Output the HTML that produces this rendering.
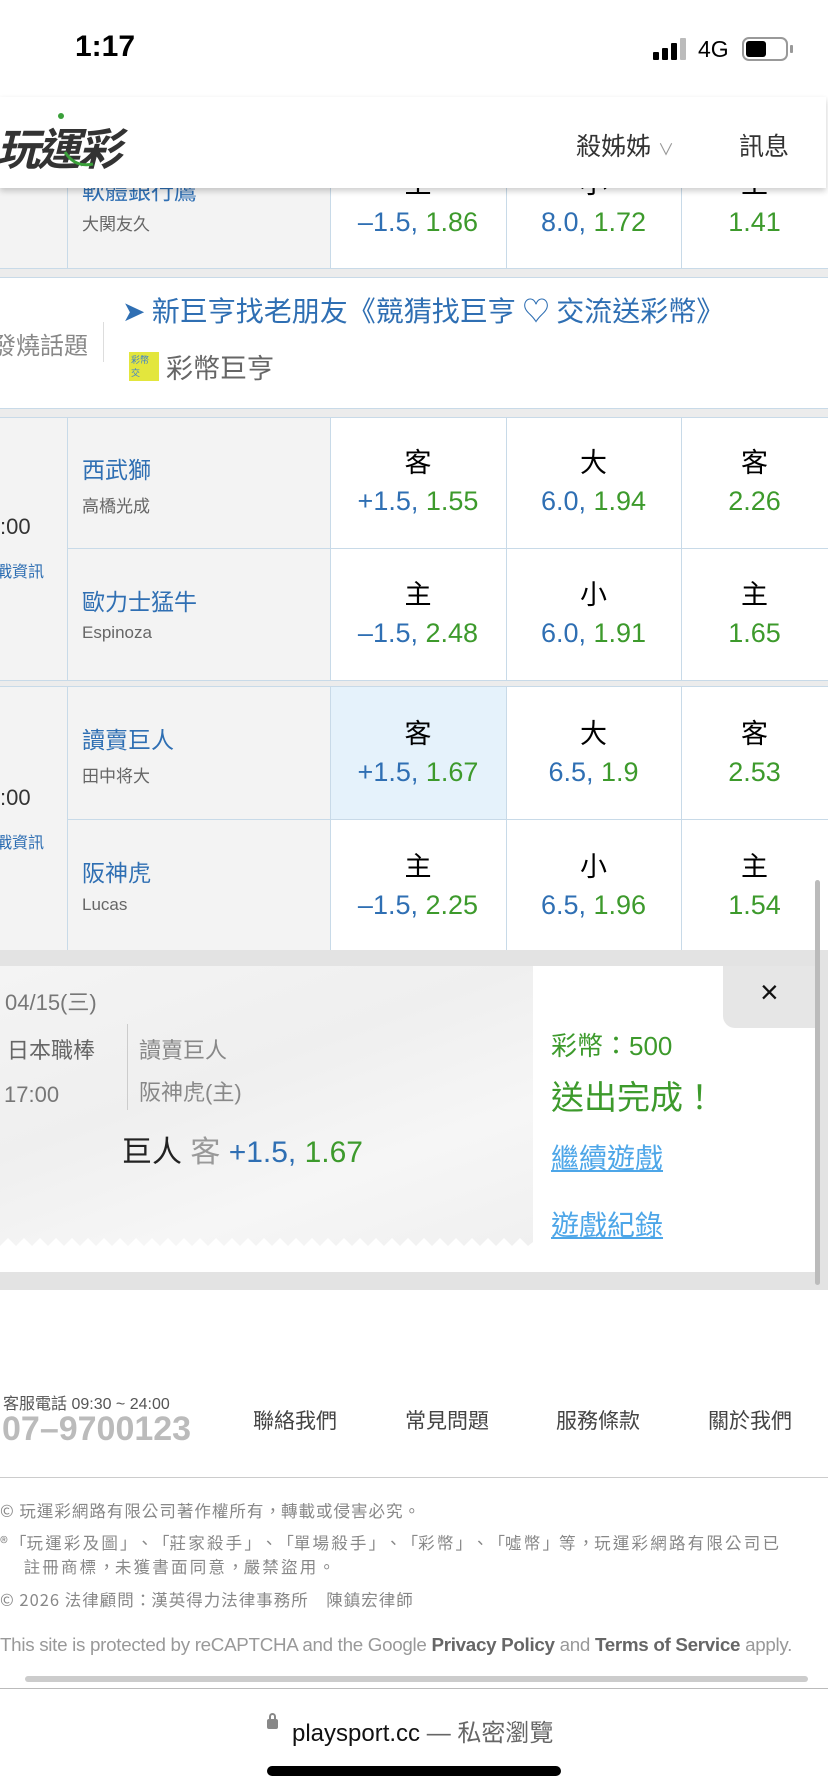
<!DOCTYPE html>
<html><head><meta charset="utf-8">
<style>
*{margin:0;padding:0;box-sizing:border-box}
body{width:828px;height:1792px;position:relative;overflow:hidden;background:#fff;font-family:"Liberation Sans","Noto Sans CJK TC",sans-serif;}
.a{position:absolute;white-space:nowrap}
.b{color:#2f6fb3}.g{color:#3d9a2c}
.cell{position:absolute;text-align:center;font-size:27px;line-height:38px}
.nm{position:absolute;left:82px;font-size:23px;color:#2f6fb3}
.sb{position:absolute;left:82px;font-size:17px;color:#666}
.vl{position:absolute;width:1px;background:#c8dae8}
.hl{position:absolute;height:1px;background:#c8dae8;left:0;width:828px}
.cjk{font-family:"Noto Sans CJK TC","Liberation Sans",sans-serif}
.p{display:inline-block;width:1em;text-align:center}
</style></head><body>
<div class="a" style="left:75px;top:30px;font-size:30px;font-weight:bold;color:#000">1:17</div>
<div class="a" style="left:653px;top:52px;width:6px;height:8px;background:#000;border-radius:1px"></div>
<div class="a" style="left:662px;top:48px;width:6px;height:12px;background:#000;border-radius:1px"></div>
<div class="a" style="left:671px;top:43px;width:6px;height:17px;background:#000;border-radius:1px"></div>
<div class="a" style="left:680px;top:38px;width:6px;height:22px;background:#bbb;border-radius:1px"></div>
<div class="a" style="left:698px;top:36px;font-size:23px;color:#000">4G</div>
<div class="a" style="left:742px;top:37px;width:46px;height:24px;border:2px solid #999;border-radius:7px"></div>
<div class="a" style="left:746px;top:41px;width:20px;height:16px;background:#000;border-radius:3px"></div>
<div class="a" style="left:790px;top:45px;width:3px;height:8px;background:#999;border-radius:1px"></div>

<div class="a" style="left:0;top:97px;width:828px;height:171px;background:#fff"></div>
<div class="a" style="left:0;top:97px;width:330px;height:171px;background:#f3f3f3"></div>
<div class="vl" style="left:67px;top:97px;height:171px"></div>
<div class="vl" style="left:330px;top:97px;height:171px"></div>
<div class="vl" style="left:506px;top:97px;height:171px"></div>
<div class="vl" style="left:681px;top:97px;height:171px"></div>
<div class="nm" style="top:172px">軟體銀行鷹</div>
<div class="cell" style="left:330px;top:165px;width:176px">主</div>
<div class="cell" style="left:506px;top:165px;width:175px">小</div>
<div class="cell" style="left:681px;top:165px;width:147px">主</div>
<div class="sb" style="top:210px">大関友久</div>
<div class="cell" style="left:330px;top:203px;width:176px"><span class="b">–1.5,</span> <span class="g">1.86</span></div>
<div class="cell" style="left:506px;top:203px;width:175px"><span class="b">8.0,</span> <span class="g">1.72</span></div>
<div class="cell g" style="left:681px;top:203px;width:147px">1.41</div>
<div class="hl" style="top:268px"></div>
<div class="a" style="left:0;top:269px;width:828px;height:8px;background:#ececec"></div>
<div class="hl" style="top:277px"></div>

<div class="a" style="left:-8px;top:326px;font-size:24px;color:#888">發燒話題</div>
<div class="a" style="left:103px;top:322px;width:1px;height:40px;background:#ddd"></div>
<div class="a cjk" style="left:122px;top:290px;font-size:28px;color:#2f6fb3">➤ 新巨亨找老朋友《競猜找巨亨 ♡ 交流送彩幣》</div>
<div class="a" style="left:129px;top:352px;width:30px;height:29px;background:#e3e63d;font-size:9px;color:#3b7fd0;line-height:13px;padding:2px">彩幣<br>交</div>
<div class="a" style="left:166px;top:347px;font-size:27px;color:#666">彩幣巨亨</div>
<div class="hl" style="top:408px"></div>
<div class="a" style="left:0;top:409px;width:828px;height:8px;background:#ececec"></div>

<div class="a" style="left:0;top:417px;width:330px;height:264px;background:#f3f3f3"></div>
<div class="hl" style="top:417px"></div>
<div class="vl" style="left:67px;top:417px;height:264px"></div>
<div class="vl" style="left:330px;top:417px;height:264px"></div>
<div class="vl" style="left:506px;top:417px;height:264px"></div>
<div class="vl" style="left:681px;top:417px;height:264px"></div>
<div class="a" style="left:67px;top:548px;width:761px;height:1px;background:#c8dae8"></div>
<div class="a" style="left:0;top:514px;font-size:22px;color:#333">:00</div>
<div class="a" style="left:-4px;top:558px;font-size:16px;color:#2f6fb3">戰資訊</div>
<div class="nm" style="top:451px">西武獅</div>
<div class="sb" style="top:492px">高橋光成</div>
<div class="nm" style="top:583px">歐力士猛牛</div>
<div class="sb" style="top:623px">Espinoza</div>
<div class="cell" style="left:330px;top:444px;width:176px">客<br><span class="b">+1.5,</span> <span class="g">1.55</span></div>
<div class="cell" style="left:506px;top:444px;width:175px">大<br><span class="b">6.0,</span> <span class="g">1.94</span></div>
<div class="cell" style="left:681px;top:444px;width:147px">客<br><span class="g">2.26</span></div>
<div class="cell" style="left:330px;top:576px;width:176px">主<br><span class="b">–1.5,</span> <span class="g">2.48</span></div>
<div class="cell" style="left:506px;top:576px;width:175px">小<br><span class="b">6.0,</span> <span class="g">1.91</span></div>
<div class="cell" style="left:681px;top:576px;width:147px">主<br><span class="g">1.65</span></div>
<div class="hl" style="top:680px"></div>
<div class="a" style="left:0;top:681px;width:828px;height:5px;background:#ececec"></div>

<div class="a" style="left:0;top:686px;width:330px;height:264px;background:#f3f3f3"></div>
<div class="a" style="left:330px;top:686px;width:176px;height:133px;background:#e5f2fb"></div>
<div class="hl" style="top:686px"></div>
<div class="vl" style="left:67px;top:686px;height:264px"></div>
<div class="vl" style="left:330px;top:686px;height:264px"></div>
<div class="vl" style="left:506px;top:686px;height:264px"></div>
<div class="vl" style="left:681px;top:686px;height:264px"></div>
<div class="a" style="left:67px;top:819px;width:761px;height:1px;background:#c8dae8"></div>
<div class="a" style="left:0;top:785px;font-size:22px;color:#333">:00</div>
<div class="a" style="left:-4px;top:829px;font-size:16px;color:#2f6fb3">戰資訊</div>
<div class="nm" style="top:721px">讀賣巨人</div>
<div class="sb" style="top:762px">田中将大</div>
<div class="nm" style="top:854px">阪神虎</div>
<div class="sb" style="top:895px">Lucas</div>
<div class="cell" style="left:330px;top:715px;width:176px">客<br><span class="b">+1.5,</span> <span class="g">1.67</span></div>
<div class="cell" style="left:506px;top:715px;width:175px">大<br><span class="b">6.5,</span> <span class="g">1.9</span></div>
<div class="cell" style="left:681px;top:715px;width:147px">客<br><span class="g">2.53</span></div>
<div class="cell" style="left:330px;top:848px;width:176px">主<br><span class="b">–1.5,</span> <span class="g">2.25</span></div>
<div class="cell" style="left:506px;top:848px;width:175px">小<br><span class="b">6.5,</span> <span class="g">1.96</span></div>
<div class="cell" style="left:681px;top:848px;width:147px">主<br><span class="g">1.54</span></div>

<div class="a" style="left:0;top:950px;width:828px;height:340px;background:#e3e3e3"></div>
<div class="a" style="left:0;top:966px;width:815px;height:306px;background:#fff"></div>
<div class="a" style="left:0;top:966px;width:533px;height:284px;background:linear-gradient(160deg,#f4f4f4,#efefef 40%,#f6f6f6 70%,#f0f0f0)"></div>
<svg class="a" style="left:0;top:1238px" width="533" height="14"><path d="M0 14 L0 8 L8 0 L16 8 L24 0 L32 8 L40 0 L48 8 L56 0 L64 8 L72 0 L80 8 L88 0 L96 8 L104 0 L112 8 L120 0 L128 8 L136 0 L144 8 L152 0 L160 8 L168 0 L176 8 L184 0 L192 8 L200 0 L208 8 L216 0 L224 8 L232 0 L240 8 L248 0 L256 8 L264 0 L272 8 L280 0 L288 8 L296 0 L304 8 L312 0 L320 8 L328 0 L336 8 L344 0 L352 8 L360 0 L368 8 L376 0 L384 8 L392 0 L400 8 L408 0 L416 8 L424 0 L432 8 L440 0 L448 8 L456 0 L464 8 L472 0 L480 8 L488 0 L496 8 L504 0 L512 8 L520 0 L528 8 L533 4 L533 14 Z" fill="#fff"/></svg>
<div class="a" style="left:723px;top:966px;width:92px;height:62px;background:#e6e6e6;border-bottom-left-radius:12px"></div>
<div class="a" style="left:760px;top:974px;font-size:32px;color:#111">×</div>
<div class="a" style="left:5px;top:985px;font-size:22px;color:#777">04/15(三)</div>
<div class="a" style="left:7px;top:1033px;font-size:22px;color:#666">日本職棒</div>
<div class="a" style="left:4px;top:1082px;font-size:22px;color:#777">17:00</div>
<div class="a" style="left:127px;top:1024px;width:1px;height:86px;background:#ccc"></div>
<div class="a" style="left:139px;top:1033px;font-size:22px;color:#888">讀賣巨人</div>
<div class="a" style="left:139px;top:1075px;font-size:22px;color:#888">阪神虎(主)</div>
<div class="a" style="left:122px;top:1127px;font-size:30px;color:#222">巨人 <span style="color:#999">客</span> <span class="b">+1.5,</span> <span class="g">1.67</span></div>
<div class="a g" style="left:551px;top:1026px;font-size:26px">彩幣：500</div>
<div class="a g" style="left:551px;top:1071px;font-size:33px">送出完成！</div>
<div class="a" style="left:551px;top:1137px;font-size:28px;color:#4da6e8;text-decoration:underline">繼續遊戲</div>
<div class="a" style="left:551px;top:1204px;font-size:28px;color:#4da6e8;text-decoration:underline">遊戲紀錄</div>
<div class="a" style="left:815px;top:880px;width:5px;height:405px;background:#bbb;border-radius:3px"></div>

<div class="a" style="left:0;top:97px;width:826px;height:91px;background:#fff;box-shadow:0 3px 6px rgba(0,0,0,.1)"></div>
<div class="a" style="left:-4px;top:114px;font-size:44px;font-weight:bold;font-style:italic;color:#333;letter-spacing:-3px">玩運彩</div>
<svg class="a" style="left:55px;top:112px" width="45" height="60"><circle cx="6" cy="4" r="3" fill="#3aa03a"/><path d="M10 40 Q20 56 38 52" stroke="#3aa03a" stroke-width="3" fill="none"/></svg>
<div class="a" style="left:576px;top:127px;font-size:25px;color:#333">殺姊姊 <span style="font-size:16px;color:#999">∨</span></div>
<div class="a" style="left:739px;top:127px;font-size:25px;color:#333">訊息</div>

<div class="a" style="left:3px;top:1390px;font-size:16px;color:#555">客服電話 09:30 ~ 24:00</div>
<div class="a" style="left:2px;top:1410px;font-size:34px;font-weight:bold;color:#bbb">07–9700123</div>
<div class="a" style="left:253px;top:1405px;font-size:21px;color:#444">聯絡我們</div>
<div class="a" style="left:405px;top:1405px;font-size:21px;color:#444">常見問題</div>
<div class="a" style="left:556px;top:1405px;font-size:21px;color:#444">服務條款</div>
<div class="a" style="left:708px;top:1405px;font-size:21px;color:#444">關於我們</div>
<div class="a" style="left:0;top:1477px;width:828px;height:1px;background:#ccc"></div>
<div class="a cjk" style="left:0;top:1498px;font-size:16.5px;color:#888;letter-spacing:1px">© 玩運彩網路有限公司著作權所有<span class="p">，</span>轉載或侵害必究<span class="p">。</span></div>
<div class="a cjk" style="left:0;top:1530px;font-size:16.5px;color:#888;line-height:24px;letter-spacing:2.2px">®<span class="p">「</span>玩運彩及圖<span class="p">」</span><span class="p">、</span><span class="p">「</span>莊家殺手<span class="p">」</span><span class="p">、</span><span class="p">「</span>單場殺手<span class="p">」</span><span class="p">、</span><span class="p">「</span>彩幣<span class="p">」</span><span class="p">、</span><span class="p">「</span>噓幣<span class="p">」</span>等<span class="p">，</span>玩運彩網路有限公司已<br>&nbsp;&nbsp;&nbsp;&nbsp;註冊商標<span class="p">，</span>未獲書面同意<span class="p">，</span>嚴禁盜用<span class="p">。</span></div>
<div class="a cjk" style="left:0;top:1587px;font-size:16.5px;color:#888;letter-spacing:1px">© 2026 法律顧問<span class="p">：</span>漢英得力法律事務所　陳鎮宏律師</div>
<div class="a" style="left:0;top:1634px;font-size:18.8px;color:#999;letter-spacing:-0.3px">This site is protected by reCAPTCHA and the Google <b style="color:#666">Privacy Policy</b> and <b style="color:#666">Terms of Service</b> apply.</div>
<div class="a" style="left:25px;top:1676px;width:783px;height:6px;background:#ccc;border-radius:3px"></div>
<div class="a" style="left:0;top:1688px;width:828px;height:1px;background:#bbb"></div>
<div class="a" style="left:267px;top:1719px;width:11px;height:10px;background:#888;border-radius:2px"></div>
<div class="a" style="left:269px;top:1713px;width:7px;height:9px;border:2px solid #888;border-radius:4px 4px 0 0"></div>
<div class="a" style="left:292px;top:1713px;font-size:24px;color:#111">playsport.cc <span style="color:#666">— 私密瀏覽</span></div>
<div class="a" style="left:267px;top:1766px;width:294px;height:10px;background:#000;border-radius:5px"></div>

<div class="a" style="left:0;top:97px;width:826px;height:91px;background:#fff;box-shadow:0 3px 6px rgba(0,0,0,.1)"></div>
<div class="a" style="left:-4px;top:114px;font-size:44px;font-weight:bold;font-style:italic;color:#333;letter-spacing:-3px">玩運彩</div>
<svg class="a" style="left:55px;top:112px" width="45" height="60"><circle cx="6" cy="4" r="3" fill="#3aa03a"/><path d="M10 40 Q20 56 38 52" stroke="#3aa03a" stroke-width="3" fill="none"/></svg>
<div class="a" style="left:576px;top:127px;font-size:25px;color:#333">殺姊姊 <span style="font-size:16px;color:#999">∨</span></div>
<div class="a" style="left:739px;top:127px;font-size:25px;color:#333">訊息</div>
</body></html>
